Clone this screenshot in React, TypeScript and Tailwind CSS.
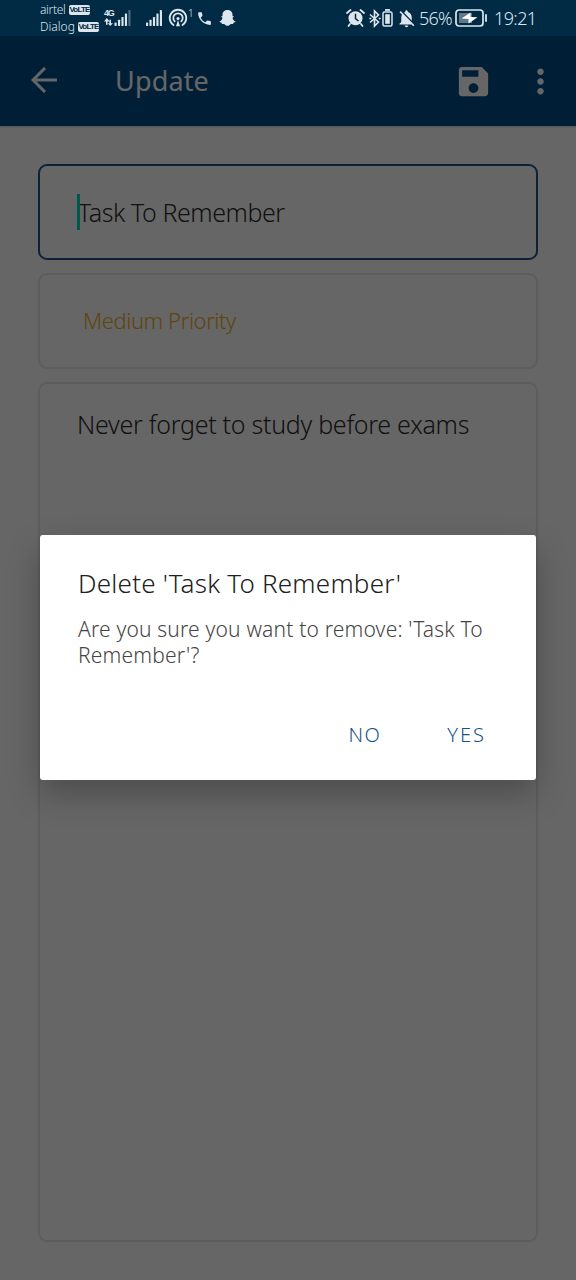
import React from "react";
import { MdSave, MdMoreVert, MdPhone, MdNotificationsOff } from "react-icons/md";

function Volte() {
  return (
    <span className="flex h-[10px] w-[21px] shrink-0 items-center justify-center rounded-[2px] bg-[#dce6ec] font-['Liberation_Sans',sans-serif] text-[8px] leading-none font-bold tracking-[-0.8px] text-[#032a45]">
      VoLTE
    </span>
  );
}

function Signal({ className, dim }: { className: string; dim?: boolean }) {
  return (
    <svg className={className} viewBox="0 0 18 18" fill="#dce6ec">
      <rect x="0" y="14" width="2.4" height="4" rx="0.5" />
      <rect x="3.9" y="11" width="2.4" height="7" rx="0.5" />
      <rect x="7.8" y="8" width="2.4" height="10" rx="0.5" />
      <rect x="11.7" y="4" width="2.4" height="14" rx="0.5" />
      <rect x="15.6" y="0" width="2.4" height="18" rx="0.5" opacity={dim ? 0.35 : 1} />
    </svg>
  );
}

function StatusBar() {
  return (
    <div className="relative z-20 flex h-9 items-start bg-[#012a45] pl-10 text-[#dce6ec]">
      <div className="flex w-[60px] shrink-0 flex-col pt-px text-[12px] leading-[17px] font-light">
        <div className="flex items-center gap-[3px]">
          <span className="w-[26px] whitespace-nowrap tracking-[-0.35px]">airtel</span>
          <Volte />
        </div>
        <div className="flex items-center gap-[3px]">
          <span className="w-[35px] whitespace-nowrap">Dialog</span>
          <Volte />
        </div>
      </div>
      <div className="ml-1 flex w-[10px] shrink-0 flex-col items-start pt-[9px]">
        <span className="font-['Liberation_Sans',sans-serif] text-[9px] leading-[9px] font-bold tracking-[-1.2px]">4G</span>
        <svg className="h-[8px] w-[9px]" viewBox="0 0 8 7" fill="#dce6ec">
          <path d="M2.5 0 5 3H3.2v3H1.8V3H0zM5.5 7 3.4 4.5h1.4V1.5h1.4v3H8z" />
        </svg>
      </div>
      <Signal className="mt-[10px] h-4 w-[17px] shrink-0" dim />
      <Signal className="mt-[10px] ml-[14px] h-4 w-[18px] shrink-0" />
      <svg className="mt-2 ml-[5px] h-5 w-5 shrink-0" viewBox="0 0 20 20" fill="none" stroke="#dce6ec" strokeWidth="1.8" strokeLinecap="round">
        <path d="M5.5 17A8.3 8.3 0 1 1 14.5 17" />
        <path d="M6.7 13.4A4.7 4.7 0 1 1 13.3 13.4" />
        <circle cx="10" cy="10.5" r="1.6" fill="#dce6ec" stroke="none" />
        <path d="M10 12 8 18.3h4z" fill="#dce6ec" stroke="none" />
      </svg>
      <span className="mt-[8px] w-[8px] shrink-0 text-[10px] leading-[11px] font-light">1</span>
      <MdPhone className="mt-[10px] size-[17px] shrink-0" />
      <svg className="mt-[10px] ml-[6px] h-[16px] w-[17px] shrink-0" viewBox="0 0 17 16" fill="#dce6ec">
        <path d="M8.5 0C5.7 0 3.500 2 3.500 4.500v1.700c-.5.1-1-.2-1.300.1-.4.5 1.100 1.100 1.200 1.700C3.200 9.600 2.200 10.900.500 11.500c-.4.7 1.400 1 2 1.300.3.300.1 1.100.6 1.200.8.1 1.600-.3 2.400.2.800.5 1.600 1.600 3 1.600s2.200-1.100 3-1.600c.8-.5 1.600-.1 2.400-.2.5-.1.300-.9.600-1.200.6-.3 2.400-.6 2-1.300-1.700-.6-2.700-1.900-2.900-3.500.1-.6 1.600-1.200 1.200-1.700-.3-.3-.8 0-1.300-.1V4.500C13.500 2 11.300 0 8.500 0z" />
      </svg>
      <div className="ml-auto flex items-start pr-[38px]">
        <svg className="mt-[9px] h-[18px] w-[19px]" viewBox="0 0 19 18">
          <path d="M1 4 4.500 1M18 4 14.500 1M4 15 2.500 17M15 15l1.500 2" stroke="#dce6ec" strokeWidth="1.8" strokeLinecap="round" />
          <circle cx="9.500" cy="9.200" r="7" fill="#dce6ec" />
          <path d="M9.500 4.700v5l3 2.300" fill="none" stroke="#012a45" strokeWidth="1.500" />
        </svg>
        <svg className="mt-[9px] ml-[4px] h-[19px] w-[12px]" viewBox="0 0 12 19" fill="none" stroke="#dce6ec" strokeWidth="1.6">
          <path d="M1 5.500 9.500 13 5.500 17V2l4 4L1 13.500" />
          <path d="M.3 9.500h2M9.700 9.500h2" />
        </svg>
        <svg className="mt-[9px] ml-[1px] h-[18px] w-[11px]" viewBox="0 0 11 18">
          <path d="M3 1h5" stroke="#dce6ec" strokeWidth="1.800" />
          <rect x="1" y="3" width="9" height="14" rx="1.500" fill="none" stroke="#dce6ec" strokeWidth="1.500" />
          <rect x="3.200" y="5.200" width="4.600" height="9.600" fill="#dce6ec" />
        </svg>
        <MdNotificationsOff className="mt-[8px] ml-[3px] size-[21px]" />
        <span className="mt-[8px] ml-[2px] w-[36px] text-[18px] leading-[21px] font-light tracking-[-0.8px]">56%</span>
        <svg className="mt-[9px] h-[19px] w-[33px]" viewBox="0 0 33 19">
          <rect x="1" y="1" width="27" height="16" rx="3" fill="none" stroke="#dce6ec" strokeWidth="1.700" />
          <rect x="4" y="4" width="13" height="10" fill="#60798a" />
          <path d="M15.500 3.500V8L22.500 8.200 13.500 14.500V10L6.500 9.500z" fill="#fff" />
          <path d="M31 6v6" stroke="#dce6ec" strokeWidth="1.800" strokeLinecap="round" />
        </svg>
        <span className="mt-[8px] ml-[6px] w-[44px] text-[18px] leading-[21px] font-light tracking-[-0.600px]">19:21</span>
      </div>
    </div>
  );
}

function AppBar() {
  return (
    <header className="flex h-[90px] shrink-0 items-center bg-[#004f89] text-white shadow-[0_1px_2px_rgba(0,0,0,0.2)]">
      <svg className="ml-[31px] h-[26px] w-[26px] -translate-y-px" viewBox="0 0 26 26" fill="none" stroke="currentColor" strokeWidth="3">
        <path d="M26 13H2M14 1 2 13l12 12" />
      </svg>
      <h1 className="ml-[58px] flex-1 text-[27px] leading-9 tracking-[0.15px]">Update</h1>
      <MdSave className="size-[39px]" />
      <MdMoreVert className="mr-[16px] ml-[28px] size-[39px]" />
    </header>
  );
}

export default function App() {
  return (
    <div className="relative flex h-[1280px] w-[576px] flex-col overflow-hidden bg-white font-['Noto_Sans',sans-serif]">
      <StatusBar />
      <AppBar />
      <main className="flex flex-1 flex-col gap-[13px] px-[38px] pt-[38px] pb-[38px] font-light text-[#2c2c2c]">
        <div className="flex h-24 items-center rounded-[9px] border-[2px] border-[#20588a] pt-[2px] pl-[37px]">
          <span className="h-9 w-[3px] -translate-y-px bg-[#00dcb4]" />
          <span className="-ml-[2px] text-[25px] tracking-[-0.45px] whitespace-nowrap">Task To Remember</span>
        </div>
        <div className="flex h-24 items-center rounded-[9px] border-2 border-[#e9e9e9] pl-[43px] text-[22px] tracking-[-0.43px] text-[#eeab1c]">
          <span className="-translate-y-px whitespace-nowrap">Medium Priority</span>
        </div>
        <div className="flex-1 rounded-[9px] border-2 border-[#e9e9e9] px-[37px] pt-[22px]">
          <p className="text-[25px] leading-9 tracking-[-0.28px] whitespace-nowrap">Never forget to study before exams</p>
        </div>
      </main>
      <div className="absolute inset-0 z-10 flex items-start justify-center bg-black/60 pt-[535px]">
        <section role="dialog" className="flex h-[245px] w-[496px] flex-col rounded-[3px] bg-white px-[39px] pt-[30px] shadow-[0_14px_32px_0px_rgba(0,0,0,0.25)]">
          <h2 className="-ml-px text-[26px] leading-9 font-light tracking-[0.22px] whitespace-nowrap text-[#202020]">Delete 'Task To Remember'</h2>
          <p className="mt-4 -ml-px text-[21px] leading-[25.5px] font-light tracking-[0.18px] whitespace-nowrap text-[#444]">
            Are you sure you want to remove: 'Task To
            <br />
            Remember'?
          </p>
          <div className="mt-[53px] flex justify-end gap-[66px] pr-[11px] text-[20px] leading-[28px] font-light text-[#155487]">
            <button className="tracking-[1.4px]">NO</button>
            <button className="tracking-[2px]">YES</button>
          </div>
        </section>
      </div>
    </div>
  );
}
